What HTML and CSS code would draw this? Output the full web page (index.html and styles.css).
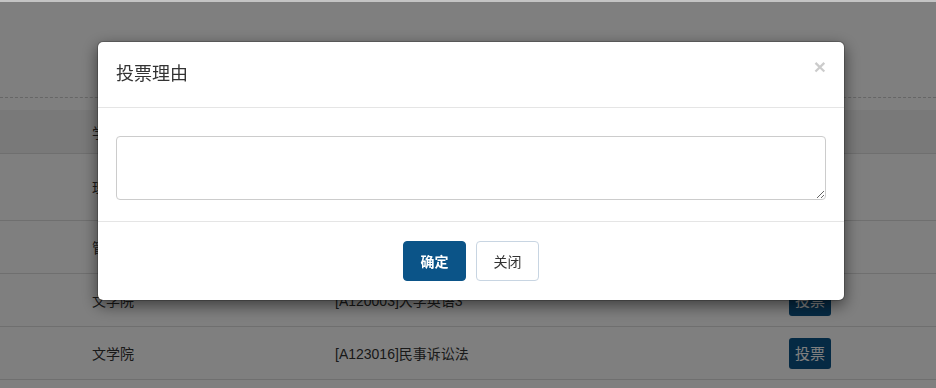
FILE: index.html
```html
<!DOCTYPE html>
<html lang="zh-CN">
<head>
    <meta charset="UTF-8">
    <title>投票</title>
    <link rel="stylesheet" href="styles.css">
</head>
<body>
    <div class="page">
        <div class="toolbar"></div>
        <table class="vote-table">
            <colgroup>
                <col class="col-college">
                <col class="col-course">
                <col class="col-action">
            </colgroup>
            <thead>
                <tr>
                    <th>学院</th>
                    <th>课程</th>
                    <th>操作</th>
                </tr>
            </thead>
            <tbody>
                <tr class="tall">
                    <td>理学院</td>
                    <td>[A110001]高等数学</td>
                    <td><span class="vote-btn">投票</span></td>
                </tr>
                <tr>
                    <td>管理学院</td>
                    <td>[A115002]管理学原理</td>
                    <td><span class="vote-btn">投票</span></td>
                </tr>
                <tr>
                    <td>文学院</td>
                    <td>[A120003]大学英语3</td>
                    <td><span class="vote-btn">投票</span></td>
                </tr>
                <tr>
                    <td>文学院</td>
                    <td>[A123016]民事诉讼法</td>
                    <td><span class="vote-btn">投票</span></td>
                </tr>
            </tbody>
        </table>
    </div>

    <!-- 投票理由弹窗 -->
    <div class="backdrop"></div>
    <div class="modal">
        <div class="modal-content">
            <div class="modal-header">
                <span class="close">&times;</span>
                <h4 class="modal-title">投票理由</h4>
            </div>
            <div class="modal-body">
                <textarea class="reason"></textarea>
            </div>
            <div class="modal-footer">
                <button class="btn btn-primary">确定</button>
                <button class="btn btn-default">关闭</button>
            </div>
        </div>
    </div>
</body>
</html>
```

FILE: styles.css
```css
body {
    margin: 0;
    background-color: #fff;
    border-top: 2px solid #c4c4c4;
    color: #333;
    font-family: "Liberation Sans", "Noto Sans CJK SC", sans-serif;
    font-size: 14px;
}

.toolbar {
    height: 95px;
    border-bottom: 1px dashed #ccc;
    margin-bottom: 12px;
}

.vote-table {
    width: 100%;
    border-collapse: collapse;
    table-layout: fixed;
}

.col-college {
    width: 335px;
}

.col-course {
    width: 454px;
}

.vote-table th,
.vote-table td {
    text-align: left;
    padding: 0;
    height: 52px;
    vertical-align: middle;
    font-weight: normal;
}

.vote-table th:first-child,
.vote-table td:first-child {
    padding-left: 92px;
}

.vote-table thead tr {
    background-color: #f3f3f3;
    border-bottom: 1px solid #dedede;
}

.vote-table thead th {
    height: 43px;
}

.vote-table tbody tr {
    border-bottom: 1px solid #dedede;
}

.vote-table tbody tr.tall td {
    height: 66px;
}

.vote-btn {
    display: inline-block;
    width: 42px;
    height: 31px;
    line-height: 31px;
    text-align: center;
    background-color: #0b5488;
    color: #fff;
    border-radius: 3px;
    font-size: 15px;
}

/* 遮罩层 */
.backdrop {
    position: fixed;
    top: 2px;
    left: 0;
    right: 0;
    bottom: 0;
    background-color: rgba(0, 0, 0, 0.5);
}

.modal {
    position: fixed;
    top: 0;
    left: 0;
    right: 0;
    bottom: 0;
}

.modal-content {
    width: 746px;
    margin: 41px 0 0 97px;
    background-color: #fff;
    border: 1px solid rgba(0, 0, 0, 0.2);
    border-radius: 6px;
    box-shadow: 0 5px 15px rgba(0, 0, 0, 0.5);
    background-clip: padding-box;
}

.modal-header {
    position: relative;
    padding: 19px 18px 20px;
    border-bottom: 1px solid #e5e5e5;
}

.modal-title {
    margin: 0;
    font-size: 18px;
    line-height: 26px;
    font-weight: normal;
    color: #333;
}

.close {
    position: absolute;
    top: 12px;
    right: 18px;
    font-size: 21px;
    font-weight: bold;
    line-height: 26px;
    color: #000;
    opacity: 0.2;
    cursor: pointer;
}

.modal-body {
    padding: 28px 18px 21px;
}

.reason {
    display: block;
    box-sizing: border-box;
    width: 100%;
    height: 64px;
    border: 1px solid #ccc;
    border-radius: 4px;
    padding: 6px 12px;
    font-family: inherit;
    font-size: 14px;
}

.modal-footer {
    padding: 19px 18px;
    border-top: 1px solid #e5e5e5;
    display: flex;
    justify-content: center;
    gap: 10px;
}

.btn {
    width: 63px;
    height: 40px;
    border-radius: 4px;
    font-family: inherit;
    font-size: 14px;
    cursor: pointer;
}

.btn-primary {
    background-color: #0b5488;
    border: 1px solid #0b5488;
    color: #fff;
    font-weight: bold;
}

.btn-default {
    background-color: #fff;
    border: 1px solid #c8d5e2;
    color: #333;
}
```
